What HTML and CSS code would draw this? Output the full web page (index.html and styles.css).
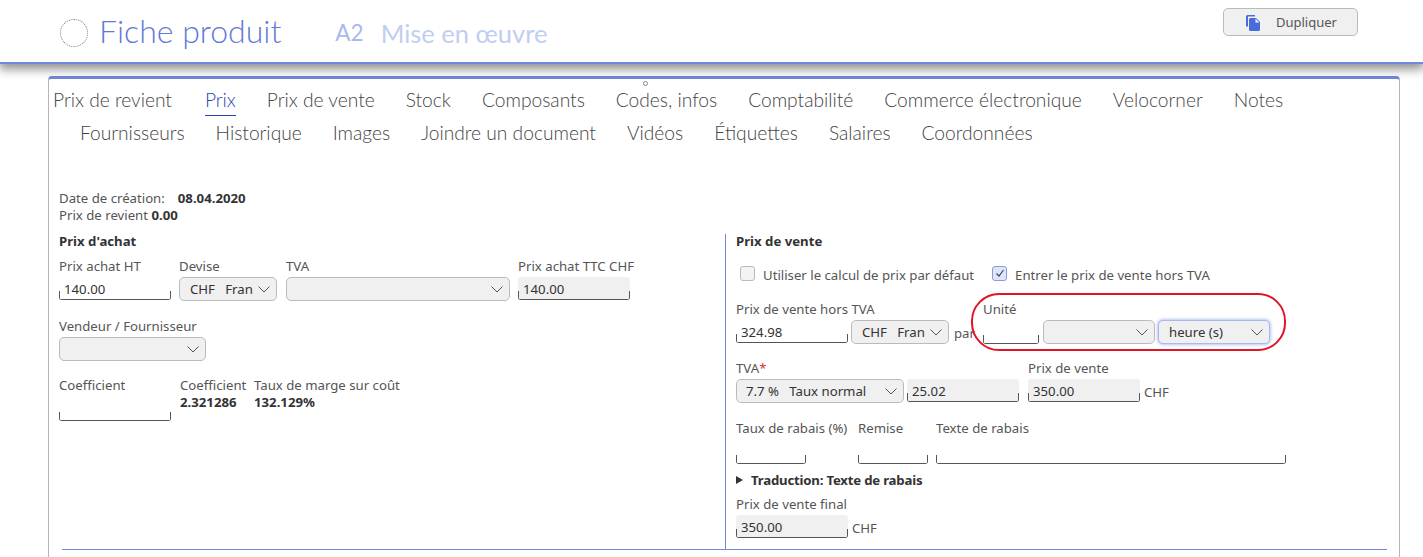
FILE: index.html
```html
<!DOCTYPE html>
<html lang="fr">
<head>
<meta charset="utf-8">
<title>Fiche produit</title>
<link rel="stylesheet" href="styles.css">
</head>
<body>
<svg class="defs" width="0" height="0" aria-hidden="true"><symbol id="chev" viewBox="0 0 12 7"><path d="M.5.5 6 6 11.5.5" fill="none" stroke="#555" stroke-width="1"/></symbol></svg>
<header class="topbar">
  <div class="spinner"></div>
  <h1 class="title">Fiche produit</h1>
  <span class="code">A2</span>
  <span class="subtitle">Mise en œuvre</span>
  <button class="dup" type="button">
    <svg width="16" height="17" viewBox="0 0 16 17"><path fill="#4a6bdc" d="M1 2.500A1.500 1.500 0 0 1 2.500 1H10v1.600H3v10H1z"/><path fill="#4a6bdc" d="M5.500 4H11l4 4v7.500a1.500 1.500 0 0 1-1.500 1.500h-8A1.500 1.500 0 0 1 4 15.500v-10A1.500 1.500 0 0 1 5.500 4z"/><path fill="#fff" d="M10.500 4.800v3.700h3.700z"/></svg>
    <span>Dupliquer</span>
  </button>
</header>
<main class="panel">
  <span class="dot"></span>
  <nav class="tabs">
    <div class="tabrow">
      <a class="tab">Prix de revient</a><a class="tab active">Prix</a><a class="tab">Prix de vente</a><a class="tab">Stock</a><a class="tab">Composants</a><a class="tab">Codes, infos</a><a class="tab">Comptabilité</a><a class="tab">Commerce électronique</a><a class="tab">Velocorner</a><a class="tab">Notes</a>
    </div>
    <div class="tabrow second">
      <a class="tab">Fournisseurs</a><a class="tab">Historique</a><a class="tab">Images</a><a class="tab">Joindre un document</a><a class="tab">Vidéos</a><a class="tab">Étiquettes</a><a class="tab">Salaires</a><a class="tab">Coordonnées</a>
    </div>
  </nav>
  <section class="meta">
    <div class="metaline"><span class="datelabel">Date de création:</span><b>08.04.2020</b></div>
    <div class="metaline">Prix de revient <b>0.00</b></div>
  </section>
  <div class="columns">
    <section class="left">
      <h2 class="heading">Prix d'achat</h2>
      <div class="row r1">
        <div class="field"><label>Prix achat HT</label><div class="inp w112">140.00</div></div>
        <div class="field"><label>Devise</label><div class="sel w98"><span>CHF&nbsp;&nbsp;&nbsp;Fran</span><svg class="chev"><use href="#chev"/></svg></div></div>
        <div class="field tva"><label>TVA</label><div class="sel w224"><span></span><svg class="chev"><use href="#chev"/></svg></div></div>
        <div class="field"><label>Prix achat TTC CHF</label><div class="inp w112 ro">140.00</div></div>
      </div>
      <div class="row r2">
        <div class="field"><label>Vendeur / Fournisseur</label><div class="sel w147"><span></span><svg class="chev"><use href="#chev"/></svg></div></div>
      </div>
      <div class="row r3">
        <div class="field f121"><label>Coefficient</label><div class="spacer"></div><div class="inp w112 empty"></div></div>
        <div class="field f74"><label>Coefficient</label><b>2.321286</b></div>
        <div class="field"><label>Taux de marge sur coût</label><b>132.129%</b></div>
      </div>
    </section>
    <section class="right">
      <h2 class="heading shift">Prix de vente</h2>
      <div class="checks">
        <span class="box"></span><span class="chklabel first">Utiliser le calcul de prix par défaut</span>
        <span class="box on"><svg width="12" height="12" viewBox="0 0 12 12"><path d="M2.500 6.500 5 9l4.500-6" fill="none" stroke="#445" stroke-width="1.200"/></svg></span><span class="chklabel">Entrer le prix de vente hors TVA</span>
      </div>
      <div class="row r4">
        <div class="field"><label>Prix de vente hors TVA</label><div class="inp w112">324.98</div></div>
        <div class="field"><label>&nbsp;</label><div class="sel w98"><span>CHF&nbsp;&nbsp;&nbsp;Fran</span><svg class="chev"><use href="#chev"/></svg></div></div>
        <div class="par">par</div>
        <div class="field unit"><label>Unité</label><div class="inp w56 empty"></div></div>
        <div class="field"><label>&nbsp;</label><div class="sel w112"><span></span><svg class="chev"><use href="#chev"/></svg></div></div>
        <div class="field"><label>&nbsp;</label><div class="sel w112 focus"><span>heure (s)</span><svg class="chev"><use href="#chev"/></svg></div></div>
        <div class="circle"></div>
      </div>
      <div class="row r5">
        <div class="field"><label>TVA<em>*</em></label><div class="sel w168"><span class="tight">7.7 %&nbsp;&nbsp;&nbsp;Taux normal</span><svg class="chev"><use href="#chev"/></svg></div></div>
        <div class="field"><label>&nbsp;</label><div class="inp w112 ro">25.02</div></div>
        <div class="field pv"><label>Prix de vente</label><div class="inp w112 ro">350.00</div></div>
        <div class="par chf">CHF</div>
      </div>
      <div class="row r6">
        <div class="field f122"><label>Taux de rabais (%)</label><div class="spacer"></div><div class="inp w70 empty"></div></div>
        <div class="field f78"><label>Remise</label><div class="spacer"></div><div class="inp w70 empty"></div></div>
        <div class="field"><label>Texte de rabais</label><div class="spacer"></div><div class="inp w350 empty"></div></div>
      </div>
      <div class="trad"><i class="tri"></i><b>Traduction: Texte de rabais</b></div>
      <div class="row r7">
        <div class="field"><label>Prix de vente final</label><div class="inp w112 ro">350.00</div></div>
        <div class="par chf2">CHF</div>
      </div>
    </section>
  </div>
  <div class="rule"></div>
</main>
</body>
</html>
```
FILE: styles.css
```css
* { box-sizing: border-box; }
html, body { margin: 0; padding: 0; }
body {
  width: 1423px; height: 557px; overflow: hidden; background: #fff;
  font-family: "Noto Sans", "Liberation Sans", sans-serif;
  font-size: 13.2px; color: #555; position: relative;
}
.defs { position: absolute; }
.topbar {
  height: 64px; display: flex; align-items: flex-start;
  background: #fff; border-bottom: 2px solid #7189dd;
  box-shadow: 0 4px 10px 1px rgba(0,0,0,.45);
  padding-left: 60px; position: relative; z-index: 2;
}
.spinner { width: 28px; height: 28px; margin-top: 19px; border: 1px dotted #777; border-radius: 50%; }
.title { margin: 11px 0 0 11px; font: 300 32px/40px "Lato", sans-serif; color: #6179d8; }
.code { margin: 18px 0 0 54px; font: 400 22.500px/30px "Lato", sans-serif; color: #a9b9ec; }
.subtitle { margin: 18px 0 0 17px; font: 400 25.500px/30px "Lato", sans-serif; color: #c2cdf2; }
.dup {
  position: absolute; left: 1223px; top: 8px; width: 135px; height: 28px;
  display: flex; align-items: center; padding: 0 0 0 21px; gap: 15px;
  background: #f0f0f0; border: 1px solid #bbb; border-radius: 5px;
  font: 13px "Noto Sans", sans-serif; color: #555;
}
.panel {
  position: relative; width: 1352px; height: 490px; margin: 12px 0 0 48px;
  border: 1px solid #b5b5b5; border-top: 3px solid #7189dd; border-radius: 4px 4px 0 0;
}
.dot { position: absolute; left: 594px; top: 2px; width: 5px; height: 5px; border: 1px solid #888; border-radius: 50%; }
.tabs { padding: 9px 0 0 4px; height: 111px; }
.tabrow { display: flex; gap: 31px; height: 33px; align-items: flex-start; }
.tabrow.second { padding-left: 27px; }
.tab {
  font: 300 19.200px/24px "Lato", sans-serif; color: #444; white-space: nowrap; padding-bottom: 3px;
  height: 30px; display: block;
}
.tab.active { color: #2f3fb5; border-bottom: 1px solid #2f3fb5; height: 28px; padding: 0; margin-left: 2px; }
.meta { padding-left: 10px; line-height: 17px; }
.metaline { height: 17px; }
.metaline b { color: #333; font-weight: 700; }
.datelabel { margin-right: 13px; }
.columns { display: flex; margin-top: 3px; padding-left: 10px; }
.left { width: 666px; padding-top: 6px; }
.right { width: 620px; border-left: 1px solid #7189dd; margin-top: 7px; padding: 0 0 0 10px; height: 316px; position: relative; }
.heading { margin: 0; font: 700 13.2px/17px "Noto Sans", sans-serif; color: #333; }
.heading.shift { margin-top: -1px; }
.row { display: flex; }
.field { display: flex; flex-direction: column; }
.field label { display: block; width: 0; height: 19px; line-height: 17px; white-space: nowrap; }
.field b { color: #333; line-height: 17px; margin-top: -2px; white-space: nowrap; }
.r1 { gap: 8px; margin-top: 8px; }
.tva { margin-left: 1px; }
.r2 { margin-top: 17px; }
.r3 { margin-top: 16px; }
.f121 { width: 121px; }
.f74 { width: 74px; }
.spacer { height: 6px; }
.inp {
  height: 23px; line-height: 25px; padding-left: 5px; color: #333;
  border-bottom: 1px solid #555; border-radius: 0 0 3px 3px;
  background:
    linear-gradient(#555,#555) left bottom/1px 8px no-repeat,
    linear-gradient(#555,#555) right bottom/1px 8px no-repeat;
}
.inp.ro {
  background:
    linear-gradient(#555,#555) left bottom/1px 8px no-repeat,
    linear-gradient(#555,#555) right bottom/1px 8px no-repeat,
    #f0f0f0;
  border-radius: 3px;
}
.inp.empty { height: 19px; }
.w56 { width: 56px; } .w70 { width: 70px; }
.w98 { width: 98px; } .w112 { width: 112px; }
.w147 { width: 147px; } .w168 { width: 168px; }
.w224 { width: 224px; } .w350 { width: 350px; }
.sel {
  height: 24px; display: flex; align-items: center; justify-content: space-between;
  padding: 0 6px 0 10px; background: #f0f0f0; border: 1px solid #bbb; border-radius: 5px; color: #333;
  white-space: nowrap;
}
.sel .tight { margin-left: -1px; }
.chev { width: 12px; height: 7px; flex: none; }
.sel.focus { border-color: #a9b9ec; box-shadow: 0 0 3px 1px #b8c6f2; }
.checks { display: flex; align-items: center; margin: 15px 0 0 4px; height: 19px; }
.box { width: 15px; height: 15px; flex: none; background: #f3f3f3; border: 1px solid #bbb; border-radius: 3px; display: flex; align-items: center; justify-content: center; margin-top: -3px; }
.box.on { background: #dfe5f8; border-color: #8a9bd8; }
.chklabel { margin-left: 8px; }
.chklabel.first { margin-right: 18px; }
.r4 { margin-top: 17px; gap: 3px; position: relative; }
.par { padding-top: 23px; margin-left: 2px; width: 26px; }
.unit { margin-right: 1px; }
.r4 .unit .inp { margin-top: 5px; }
.circle { position: absolute; left: 235px; top: -8px; width: 315px; height: 58px; border: 2px solid #e11526; border-radius: 28px; pointer-events: none; }
.r5 { margin-top: 16px; gap: 3px; }
.pv { margin-left: 6px; }
.chf { margin-left: 1px; }
.r6 { margin-top: 17px; }
.f122 { width: 122px; } .f78 { width: 78px; }
.trad { display: flex; align-items: center; margin-top: 7px; height: 17px; }
.trad b { color: #333; letter-spacing: -.2px; }
.tri { width: 0; height: 0; border-left: 7px solid #333; border-top: 4px solid transparent; border-bottom: 4px solid transparent; margin-right: 8px; }
.r7 { margin-top: 8px; }
.chf2 { margin-left: 4px; }
em { color: #d33; font-style: normal; }
.rule { position: absolute; left: 13px; top: 470px; width: 1325px; height: 1px; background: #7189dd; }
```
